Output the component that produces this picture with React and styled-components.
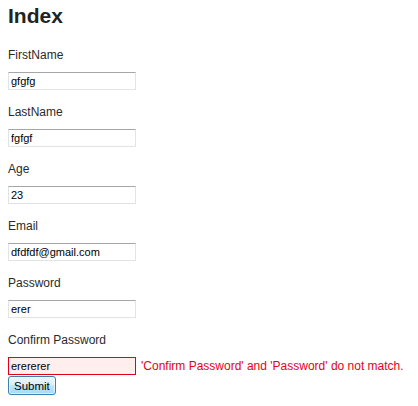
import React from "react";
import styled, { createGlobalStyle } from "styled-components";

const Global = createGlobalStyle`
  html, body { margin: 0; padding: 0; background: #fff; }
  body { font-family: "Liberation Sans", Arial, sans-serif; }
`;

const Page = styled.div`
  padding: 4px 8px;
`;

const Title = styled.h2`
  margin: 0;
  font-size: 21px;
  line-height: 24px;
  font-weight: bold;
  color: #222;
`;

const Form = styled.form`
  margin-top: 20px;
  display: flex;
  flex-direction: column;
  align-items: flex-start;
`;

const Field = styled.div`
  display: flex;
  flex-direction: column;
  align-items: flex-start;
  margin-bottom: ${(p) => (p.$last ? 0 : 15)}px;
`;

const Label = styled.label`
  font-size: 12px;
  line-height: 15px;
  color: #2a2a2a;
  margin-bottom: 9px;
`;

const Row = styled.div`
  display: flex;
  align-items: center;
  gap: 5px;
`;

const Input = styled.input`
  box-sizing: border-box;
  width: 128px;
  height: 18px;
  margin: 0;
  padding: 0 2px;
  font-family: "Liberation Sans", Arial, sans-serif;
  font-size: 11px;
  color: #000;
  outline: none;
  background: ${(p) => (p.$error ? "#ffeeee" : "#fff")};
  border: 1px solid ${(p) => (p.$error ? "#e0001c" : "#e2e3e4")};
  border-top-color: ${(p) => (p.$error ? "#e0001c" : "#a5a6a8")};
`;

const ErrorText = styled.span`
  font-size: 12px;
  line-height: 15px;
  color: #e8001c;
  white-space: nowrap;
`;

const Button = styled.button`
  margin-top: 1px;
  height: 19px;
  padding: 0 5px;
  font-family: "Liberation Sans", Arial, sans-serif;
  font-size: 11.5px;
  line-height: 14px;
  color: #000;
  border: 1px solid #3c7fb1;
  border-radius: 3px;
  background: linear-gradient(
    to bottom,
    #eaf6fd 0%,
    #d9f0fc 45%,
    #bee6fd 50%,
    #a7d9f5 100%
  );
  box-shadow: inset 0 0 0 1px rgba(255, 255, 255, 0.6);
`;

const fields = [
  { label: "FirstName", value: "gfgfg" },
  { label: "LastName", value: "fgfgf" },
  { label: "Age", value: "23" },
  { label: "Email", value: "dfdfdf@gmail.com" },
  { label: "Password", value: "erer" },
];

export default function App() {
  return (
    <Page>
      <Global />
      <Title>Index</Title>
      <Form onSubmit={(e) => e.preventDefault()}>
        {fields.map((f) => (
          <Field key={f.label}>
            <Label>{f.label}</Label>
            <Input defaultValue={f.value} />
          </Field>
        ))}
        <Field $last>
          <Label>Confirm Password</Label>
          <Row>
            <Input $error defaultValue="erererer" />
            <ErrorText>'Confirm Password' and 'Password' do not match.</ErrorText>
          </Row>
        </Field>
        <Button type="submit">Submit</Button>
      </Form>
    </Page>
  );
}
